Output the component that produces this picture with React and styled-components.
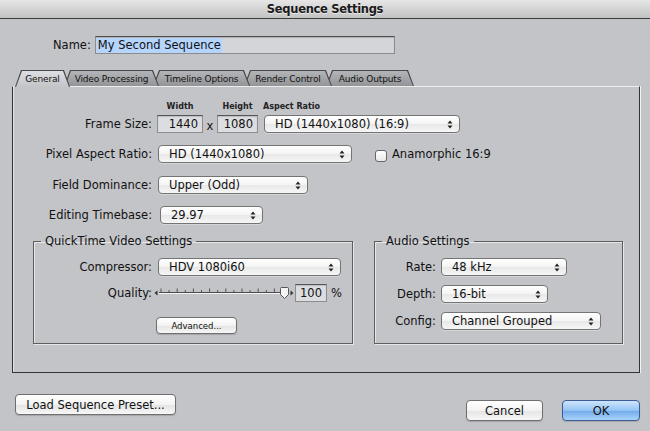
import React from 'react';
import styled, { createGlobalStyle } from 'styled-components';

const GlobalStyle = createGlobalStyle`
  html, body { margin: 0; padding: 0; }
  body {
    background: #c3c4c8;
    font-family: "DejaVu Sans", "Noto Sans", sans-serif;
    font-size: 11.5px;
    color: #111;
  }
`;

const Window = styled.div`
  width: 650px;
  height: 431px;
  background: #c3c4c8;
  display: flex;
  flex-direction: column;
  overflow: hidden;
`;

const TitleBar = styled.div`
  flex: none;
  height: 18px;
  background: linear-gradient(#e6e6e6, #c2c2c2);
  border-bottom: 1px solid #3d3d3d;
  display: flex;
  align-items: center;
  justify-content: center;
  font-weight: bold;
  font-size: 11.5px;
  letter-spacing: -0.3px;
  color: #1a1a1a;
  text-shadow: 0 1px 0 rgba(255, 255, 255, 0.6);
`;

const Body = styled.div`
  display: flex;
  flex-direction: column;
  padding: 0 10px 0 12px;
`;

const NameRow = styled.div`
  display: flex;
  align-items: center;
  margin-top: 17px;
  padding-left: 41px;
  height: 18px;
`;

const NameLabel = styled.span`
  margin-right: 4px;
`;

const NameField = styled.div`
  box-sizing: border-box;
  width: 300px;
  height: 18px;
  background: #d4d5d8;
  border: 1px solid #8c8c8c;
  border-top-color: #4e4e4e;
  box-shadow: inset 0 1px 1px rgba(0, 0, 0, 0.18);
  display: flex;
  align-items: center;
  padding-left: 1px;
`;

const Selected = styled.span`
  background: #b5d5fd;
  line-height: 15px;
  padding: 0 1px;
`;

const TabBar = styled.div`
  display: flex;
  align-items: flex-start;
  height: 16px;
  margin-top: 16px;
  padding-left: 3px;
`;

const tabShape = 'polygon(0 100%, 6px 0, calc(100% - 6px) 0, 100% 100%)';

const Tab = styled.div`
  position: relative;
  z-index: ${(p) => p.$z};
  box-sizing: border-box;
  width: ${(p) => p.$w}px;
  height: ${(p) => (p.$active ? 17 : 16)}px;
  margin-left: ${(p) => (p.$first ? 0 : -6)}px;
  padding: 1px 1px 0 1px;
  display: flex;
  background: #474747;
  clip-path: ${tabShape};
`;

const TabFace = styled.div`
  flex: 1;
  display: flex;
  align-items: center;
  justify-content: center;
  clip-path: ${tabShape};
  background: ${(p) =>
    p.$active
      ? 'linear-gradient(#dedfe2, #c3c4c8)'
      : 'linear-gradient(#b4b5b8, #939497)'};
  font-size: 9px;
  letter-spacing: -0.15px;
  color: #111;
  white-space: nowrap;
  padding-bottom: ${(p) => (p.$active ? 1 : 0)}px;
`;

const Panel = styled.div`
  box-sizing: border-box;
  width: 628px;
  height: 287px;
  border-top: 1px solid #ededed;
  border-left: 1px solid #333;
  border-right: 1px solid #333;
  border-bottom: 1px solid #333;
  box-shadow: inset 1px 0 0 #e2e2e2, 1px 0 0 #f2f2f2;
  display: flex;
  flex-direction: column;
  padding-top: 14px;
`;

const FormRow = styled.div`
  display: grid;
  grid-template-columns: ${(p) => p.$label}px auto;
  column-gap: ${(p) => p.$gap ?? 5}px;
  align-items: center;
  height: ${(p) => p.$h ?? 18}px;
  margin-top: ${(p) => p.$mt ?? 0}px;
`;

const Label = styled.span`
  text-align: right;
  white-space: nowrap;
`;

const Cell = styled.div`
  display: flex;
  align-items: center;
  white-space: nowrap;
`;

const SmallLabel = styled.span`
  font-size: 8px;
  font-weight: bold;
  color: #222;
  width: ${(p) => (p.$w ? `${p.$w}px` : 'auto')};
  text-align: ${(p) => (p.$w ? 'center' : 'left')};
  margin-left: ${(p) => p.$ml ?? 0}px;
`;

const NumBox = styled.div`
  box-sizing: border-box;
  width: ${(p) => p.$w}px;
  height: 18px;
  margin-left: ${(p) => p.$ml ?? 0}px;
  background: #dcdde0;
  border: 1px solid #8d8d8d;
  border-top-color: #555;
  box-shadow: inset 0 1px 1px rgba(0, 0, 0, 0.15);
  text-align: right;
  padding-right: 4px;
  line-height: 16px;
`;

const Times = styled.span`
  width: 14px;
  text-align: center;
  padding-top: 3px;
`;

const PopUp = styled.div`
  box-sizing: border-box;
  width: ${(p) => p.$w}px;
  height: 18px;
  margin-left: ${(p) => p.$ml ?? 0}px;
  display: flex;
  align-items: center;
  padding: 0 6px 0 10px;
  border: 1px solid #747474;
  border-radius: 4px;
  background: linear-gradient(#ffffff, #f4f4f4 50%, #e8e8e8 52%, #f6f6f6);
  box-shadow: 0 1px 0 rgba(255, 255, 255, 0.3);
  white-space: nowrap;
`;

const PopText = styled.span`
  flex: 1;
`;

const Arrows = () => (
  <svg width="6" height="9" viewBox="0 0 6 9">
    <path d="M0.5 3.5 L3 0.5 L5.5 3.5 Z M0.5 5.5 L3 8.5 L5.5 5.5 Z" fill="#222" />
  </svg>
);

const Select = ({ w, ml, children }) => (
  <PopUp $w={w} $ml={ml}>
    <PopText>{children}</PopText>
    <Arrows />
  </PopUp>
);

const CheckBox = styled.span`
  box-sizing: border-box;
  width: 12px;
  height: 12px;
  margin-left: ${(p) => p.$ml}px;
  margin-top: 3px;
  border: 1px solid #666;
  border-radius: 3px;
  background: linear-gradient(#ffffff, #e9e9e9);
`;

const CheckLabel = styled.span`
  margin-left: 5px;
`;

const Groups = styled.div`
  display: flex;
  align-items: stretch;
  gap: 21px;
  margin-top: 10px;
  padding-left: 20px;
`;

const GroupBox = styled.fieldset`
  box-sizing: border-box;
  width: ${(p) => p.$w}px;
  margin: 0;
  padding: 0 0 9px 0;
  min-width: 0;
  border: 1px solid #5e5e5e;
  box-shadow: inset 1px 1px 0 #e6e6e6, 1px 1px 0 #e6e6e6;
`;

const GroupTitle = styled.legend`
  margin-left: 7px;
  padding: 0 4px;
  line-height: 14px;
  font-size: 11.5px;
`;

const GroupBody = styled.div`
  padding-top: 10px;
  display: flex;
  flex-direction: column;
`;

const Percent = styled.span`
  margin-left: 4px;
`;

const SliderSvg = styled.svg`
  margin-left: -4px;
  flex: none;
`;

const Slider = () => {
  const ticks = [];
  for (let i = 0; i < 16; i++) {
    const x = 7 + i * 8.1;
    const tall = i % 2 === 0;
    ticks.push(
      <line key={i} x1={x} x2={x} y1={tall ? 4.5 : 6} y2={8.5} stroke="#555" strokeWidth="1" />
    );
  }
  return (
    <SliderSvg width="140" height="18" viewBox="0 0 140 18">
      <path d="M0.5 9 L3.5 6.5 L3.5 11.5 Z" fill="#333" />
      <line x1="5" x2="133" y1="8.5" y2="8.5" stroke="#4a4a4a" strokeWidth="1" />
      <line x1="5" x2="133" y1="9.5" y2="9.5" stroke="#f4f4f4" strokeWidth="1" />
      {ticks}
      <path
        d="M126.5 4.5 Q126.5 3.5 127.5 3.5 L133.5 3.5 Q134.5 3.5 134.5 4.5 L134.5 10.5 L130.5 14.5 L126.5 10.5 Z"
        fill="#f4f4f4"
        stroke="#555"
        strokeWidth="1"
      />
      <path d="M139.5 9 L136.5 6.5 L136.5 11.5 Z" fill="#333" />
    </SliderSvg>
  );
};

const SmallButton = styled.button`
  box-sizing: border-box;
  width: ${(p) => p.$w}px;
  height: ${(p) => p.$h}px;
  margin-left: ${(p) => p.$ml ?? 0}px;
  padding: 0;
  font-family: "DejaVu Sans", "Noto Sans", sans-serif;
  font-size: ${(p) => p.$fs}px;
  color: #111;
  border: 1px solid #747474;
  border-radius: 4px;
  background: ${(p) =>
    p.$primary
      ? 'linear-gradient(#cfe5fc, #93c3f3 50%, #72abea 52%, #a9d3fb)'
      : 'linear-gradient(#ffffff, #f3f3f3 50%, #e4e4e4 52%, #f7f7f7)'};
  border-color: ${(p) => (p.$primary ? '#3a5c98' : '#6e6e6e')};
  box-shadow: 0 1px 1px rgba(0, 0, 0, 0.15);
`;

const Footer = styled.div`
  display: flex;
  justify-content: space-between;
  align-items: flex-start;
  margin-top: 21px;
  padding-left: 3px;
`;

const FooterRight = styled.div`
  display: flex;
  gap: 19px;
  margin-top: 6px;
`;

const tabs = [
  { label: 'General', w: 55 },
  { label: 'Video Processing', w: 95 },
  { label: 'Timeline Options', w: 97 },
  { label: 'Render Control', w: 88 },
  { label: 'Audio Outputs', w: 88 },
];

export default function App() {
  return (
    <>
      <GlobalStyle />
      <Window>
        <TitleBar>Sequence Settings</TitleBar>
        <Body>
          <NameRow>
            <NameLabel>Name:</NameLabel>
            <NameField>
              <Selected>My Second Sequence</Selected>
            </NameField>
          </NameRow>

          <TabBar>
            {tabs.map((t, i) => (
              <Tab key={t.label} $w={t.w} $first={i === 0} $active={i === 0} $z={i === 0 ? 20 : 10 - i}>
                <TabFace $active={i === 0}>{t.label}</TabFace>
              </Tab>
            ))}
          </TabBar>

          <Panel>
            <FormRow $label={139} $h={10}>
              <span />
              <Cell>
                <SmallLabel $w={46}>Width</SmallLabel>
                <SmallLabel $w={41} $ml={14}>Height</SmallLabel>
                <SmallLabel $ml={5}>Aspect Ratio</SmallLabel>
              </Cell>
            </FormRow>

            <FormRow $label={139} $mt={4}>
              <Label>Frame Size:</Label>
              <Cell>
                <NumBox $w={46}>1440</NumBox>
                <Times>x</Times>
                <NumBox $w={41}>1080</NumBox>
                <Select w={196} ml={6}>HD (1440x1080) (16:9)</Select>
              </Cell>
            </FormRow>

            <FormRow $label={139} $mt={12}>
              <Label>Pixel Aspect Ratio:</Label>
              <Cell>
                <Select w={194} ml={1}>HD (1440x1080)</Select>
                <CheckBox $ml={23} />
                <CheckLabel>Anamorphic 16:9</CheckLabel>
              </Cell>
            </FormRow>

            <FormRow $label={139} $mt={13}>
              <Label>Field Dominance:</Label>
              <Cell>
                <Select w={150} ml={1}>Upper (Odd)</Select>
              </Cell>
            </FormRow>

            <FormRow $label={139} $mt={12}>
              <Label>Editing Timebase:</Label>
              <Cell>
                <Select w={103} ml={3}>29.97</Select>
              </Cell>
            </FormRow>

            <Groups>
              <GroupBox $w={320}>
                <GroupTitle>QuickTime Video Settings</GroupTitle>
                <GroupBody>
                  <FormRow $label={118} $gap={6}>
                    <Label>Compressor:</Label>
                    <Cell>
                      <Select w={183}>HDV 1080i60</Select>
                    </Cell>
                  </FormRow>
                  <FormRow $label={118} $gap={6} $mt={8}>
                    <Label>Quality:</Label>
                    <Cell>
                      <Slider />
                      <NumBox $w={32} $ml={1}>100</NumBox>
                      <Percent>%</Percent>
                    </Cell>
                  </FormRow>
                  <FormRow $label={118} $gap={6} $mt={15} $h={17}>
                    <span />
                    <Cell>
                      <SmallButton $w={81} $h={17} $fs={8.5} $ml={-2}>
                        Advanced...
                      </SmallButton>
                    </Cell>
                  </FormRow>
                </GroupBody>
              </GroupBox>

              <GroupBox $w={249}>
                <GroupTitle>Audio Settings</GroupTitle>
                <GroupBody>
                  <FormRow $label={61}>
                    <Label>Rate:</Label>
                    <Cell>
                      <Select w={126}>48 kHz</Select>
                    </Cell>
                  </FormRow>
                  <FormRow $label={61} $mt={9}>
                    <Label>Depth:</Label>
                    <Cell>
                      <Select w={107}>16-bit</Select>
                    </Cell>
                  </FormRow>
                  <FormRow $label={61} $mt={9}>
                    <Label>Config:</Label>
                    <Cell>
                      <Select w={160}>Channel Grouped</Select>
                    </Cell>
                  </FormRow>
                </GroupBody>
              </GroupBox>
            </Groups>
          </Panel>

          <Footer>
            <SmallButton $w={161} $h={21} $fs={11.5}>
              Load Sequence Preset...
            </SmallButton>
            <FooterRight>
              <SmallButton $w={77} $h={21} $fs={11.5}>
                Cancel
              </SmallButton>
              <SmallButton $w={78} $h={21} $fs={11.5} $primary>
                OK
              </SmallButton>
            </FooterRight>
          </Footer>
        </Body>
      </Window>
    </>
  );
}
